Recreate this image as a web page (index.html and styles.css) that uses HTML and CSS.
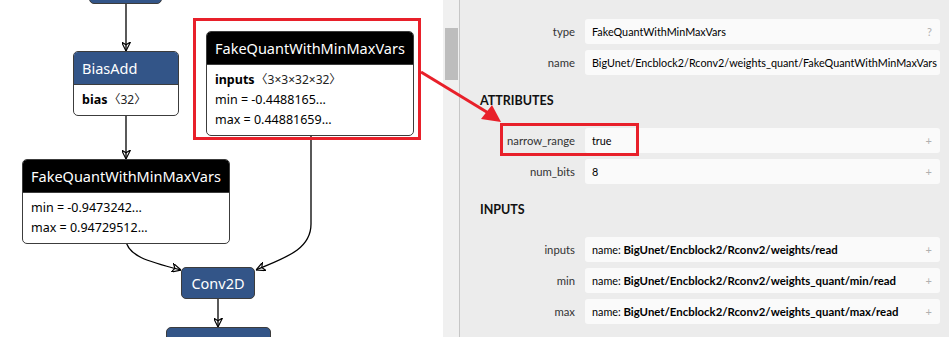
FILE: index.html
```html
<!DOCTYPE html>
<html lang="en">
<head>
    <meta charset="UTF-8">
    <title>Model Graph</title>
    <link rel="stylesheet" href="styles.css">
</head>
<body>
    <div class="graph">
        <svg class="edges" width="443" height="337">
            <defs>
                <marker id="arrow" viewBox="0 0 10 10" refX="10" refY="5" markerWidth="9" markerHeight="9" markerUnits="userSpaceOnUse" orient="auto">
                    <path d="M0,0 L10,5 L0,10 L3,5 z" fill="#000"/>
                </marker>
            </defs>
            <path d="M126,4 L126,51" marker-end="url(#arrow)"/>
            <path d="M126,112 L126,159" marker-end="url(#arrow)"/>
            <path d="M126,239 C126,256 150,262 181,270" marker-end="url(#arrow)"/>
            <path d="M311,131 L311,224 C311,250 284,258 256,270" marker-end="url(#arrow)"/>
            <path d="M218,299 L218,327" marker-end="url(#arrow)"/>
        </svg>

        <div class="node op" style="left:89px; top:-30px; width:73px; height:34px;"></div>

        <div class="node" style="left:73px; top:51px; width:106px;">
            <div class="node-head op">BiasAdd</div>
            <div class="node-body">
                <div><b>bias</b><span class="dim">〈32〉</span></div>
            </div>
        </div>

        <div class="node" style="left:22px; top:159px; width:208px;">
            <div class="node-head quant">FakeQuantWithMinMaxVars</div>
            <div class="node-body">
                <div>min = -0.9473242...</div>
                <div>max = 0.94729512...</div>
            </div>
        </div>

        <div class="node" style="left:206px; top:31px; width:208px;">
            <div class="node-head quant">FakeQuantWithMinMaxVars</div>
            <div class="node-body">
                <div><b>inputs</b><span class="dim">〈3×3×32×32〉</span></div>
                <div>min = -0.4488165...</div>
                <div>max = 0.44881659...</div>
            </div>
        </div>

        <div class="node op small" style="left:181px; top:267px; width:74px;">Conv2D</div>

        <div class="node op" style="left:166px; top:327px; width:105px; height:40px;"></div>
    </div>

    <div class="scrollbar">
        <div class="thumb"></div>
    </div>

    <div class="sidebar">
        <div class="prop">
            <div class="prop-name">type</div>
            <div class="prop-value">FakeQuantWithMinMaxVars<span class="prop-btn">?</span></div>
        </div>
        <div class="prop">
            <div class="prop-name">name</div>
            <div class="prop-value">BigUnet/Encblock2/Rconv2/weights_quant/FakeQuantWithMinMaxVars</div>
        </div>

        <h3>ATTRIBUTES</h3>
        <div class="prop">
            <div class="prop-name">narrow_range</div>
            <div class="prop-value">true<span class="prop-btn">+</span></div>
        </div>
        <div class="prop">
            <div class="prop-name">num_bits</div>
            <div class="prop-value">8<span class="prop-btn">+</span></div>
        </div>

        <h3>INPUTS</h3>
        <div class="prop">
            <div class="prop-name">inputs</div>
            <div class="prop-value">name: <b>BigUnet/Encblock2/Rconv2/weights/read</b><span class="prop-btn">+</span></div>
        </div>
        <div class="prop">
            <div class="prop-name">min</div>
            <div class="prop-value">name: <b>BigUnet/Encblock2/Rconv2/weights_quant/min/read</b><span class="prop-btn">+</span></div>
        </div>
        <div class="prop">
            <div class="prop-name">max</div>
            <div class="prop-value">name: <b>BigUnet/Encblock2/Rconv2/weights_quant/max/read</b><span class="prop-btn">+</span></div>
        </div>
    </div>

    <!-- annotation layer drawn on top of the screenshot -->
    <svg class="marks" width="949" height="337">
        <rect x="194.5" y="19.5" width="225" height="119"/>
        <rect x="501.5" y="124.5" width="136" height="30"/>
        <path d="M421,72 L490,114"/>
        <path class="head" d="M501,122 L481,119 L492,105 z"/>
    </svg>
</body>
</html>
```

FILE: styles.css
```css
body {
    margin: 0;
    padding: 0;
    display: flex;
    height: 337px;
    overflow: hidden;
    font-family: "Noto Sans", "Open Sans", sans-serif;
    position: relative;
}

/* Graph canvas */
.graph {
    width: 443px;
    height: 337px;
    background: white;
    position: relative;
    overflow: hidden;
    flex-shrink: 0;
}

.edges {
    position: absolute;
    left: 0;
    top: 0;
}

.edges path {
    fill: none;
    stroke: #000;
    stroke-width: 1.3;
}

.node {
    position: absolute;
    box-sizing: border-box;
    border: 1px solid #3c3c3c;
    border-radius: 5px;
    background: white;
    overflow: hidden;
}

.node.op {
    background: #335588;
}

.node.small {
    height: 32px;
    line-height: 30px;
    text-align: center;
    color: white;
    font-size: 14.5px;
}

.node-head {
    height: 32px;
    line-height: 32px;
    padding: 0 8px;
    color: white;
    font-size: 14.5px;
    white-space: nowrap;
}

.node-head.op {
    background: #335588;
}

.node-head.quant {
    background: #000;
}

.node-body {
    border-top: 1px solid #3c3c3c;
    padding: 5px 8px 5px;
    font-size: 12.5px;
    line-height: 20px;
    color: #000;
    white-space: nowrap;
}

.node-body .dim {
    font-family: "Noto Sans", "Noto Sans CJK SC", sans-serif;
    font-size: 12px;
    color: #222;
    margin-left: 1px;
}

/* Scrollbar */
.scrollbar {
    width: 16px;
    background: #f0f0f0;
    border-right: 1px solid #c6c6c6;
    flex-shrink: 0;
}

.thumb {
    margin: 28px 1px 0 2px;
    height: 52px;
    background: #bdbdbd;
}

/* Properties sidebar */
.sidebar {
    flex: 1;
    min-width: 0;
    background: #ececec;
    padding: 19px 9px 0 20px;
    font-family: Lato, "Noto Sans", sans-serif;
    font-size: 10.8px;
    color: #000;
}

.sidebar b {
    font-size: 11.4px;
}

.sidebar h3 {
    font-size: 12.5px;
    font-weight: bold;
    line-height: 16px;
    margin: 18px 0 19px;
    color: #111;
}

.prop {
    display: grid;
    grid-template-columns: 95px 1fr;
    column-gap: 10px;
    margin-bottom: 6px;
}

.prop-name {
    text-align: right;
    line-height: 25px;
    color: #333;
    font-size: 11.3px;
}

.prop-value {
    position: relative;
    background: #fafafa;
    border-radius: 3px;
    height: 25px;
    line-height: 25px;
    padding: 0 5px 0 7px;
    white-space: nowrap;
    overflow: hidden;
}

.prop-btn {
    position: absolute;
    right: 8px;
    top: 0;
    color: #b0b0b0;
    font-size: 11px;
}

/* Red annotations */
.marks {
    position: absolute;
    left: 0;
    top: 0;
    pointer-events: none;
}

.marks rect,
.marks path {
    fill: none;
    stroke: #e8202a;
    stroke-width: 3;
}

.marks path.head {
    fill: #e8202a;
    stroke: none;
}
```
